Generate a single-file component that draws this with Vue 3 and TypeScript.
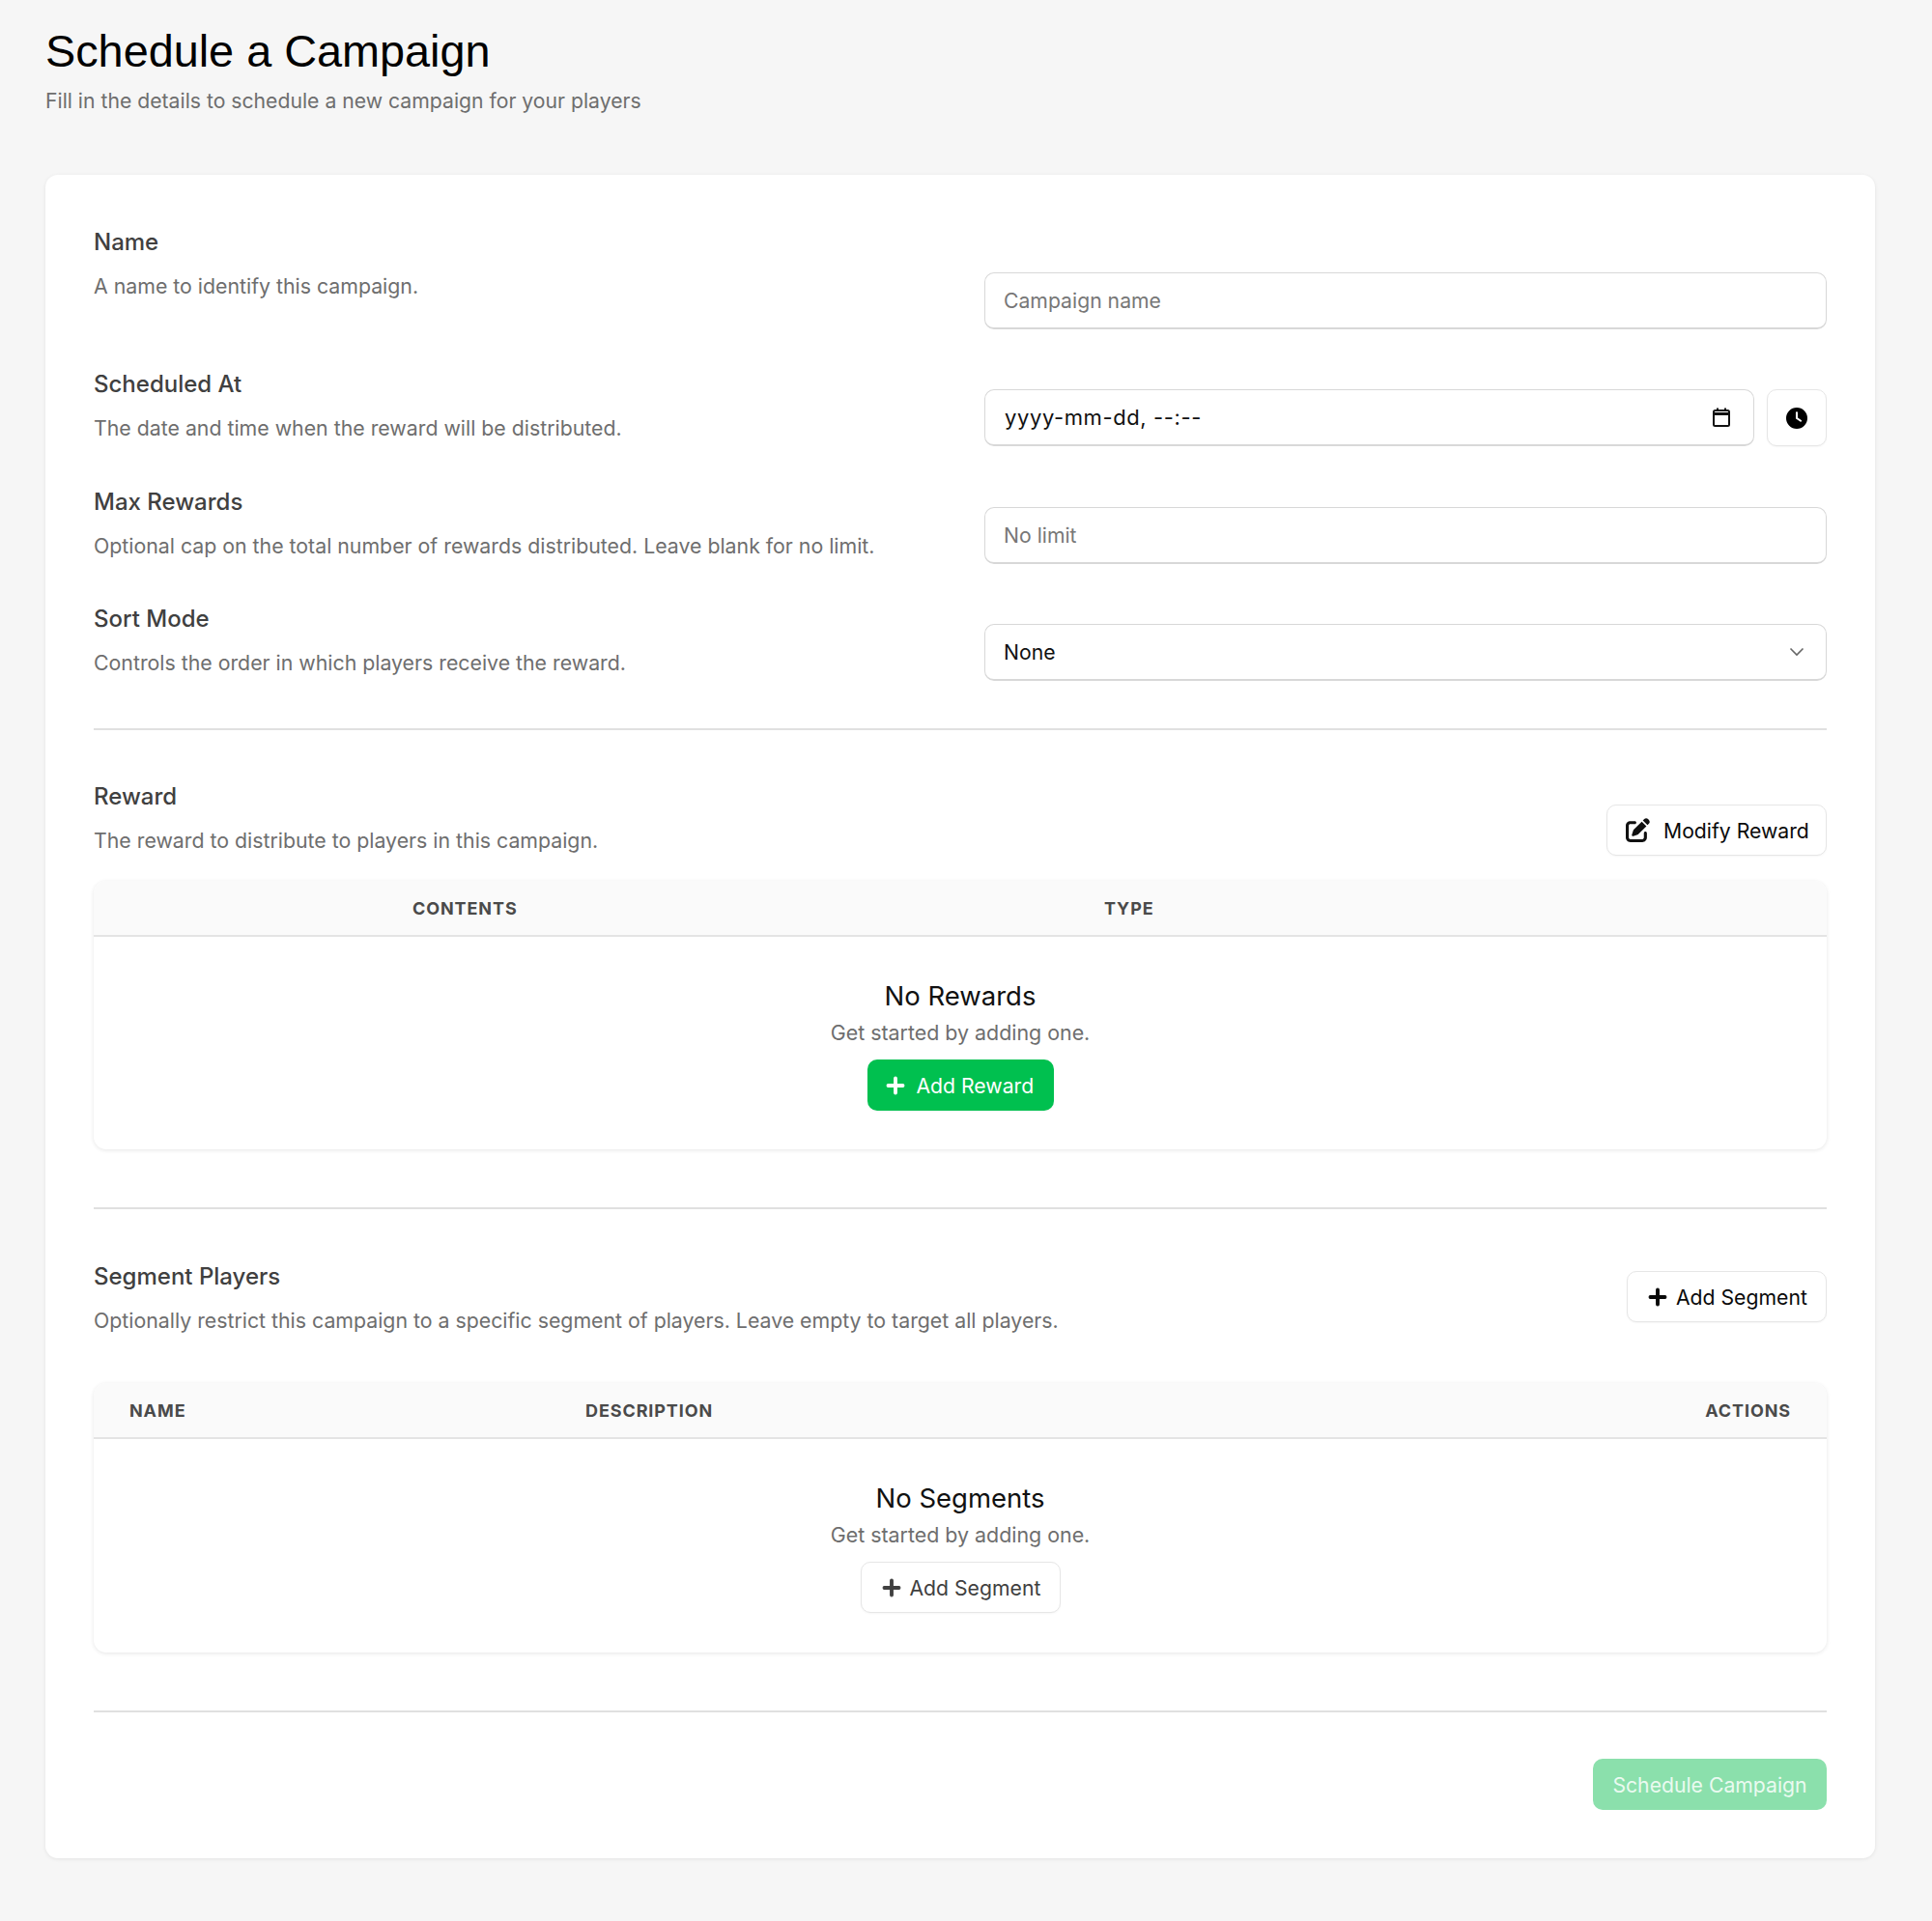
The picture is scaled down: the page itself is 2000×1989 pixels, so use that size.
<script setup lang="ts">
interface Row { label: string; desc: string; kind: string; placeholder?: string }
const rows: Row[] = [
  { label: 'Name', desc: 'A name to identify this campaign.', kind: 'text', placeholder: 'Campaign name' },
  { label: 'Scheduled At', desc: 'The date and time when the reward will be distributed.', kind: 'date' },
  { label: 'Max Rewards', desc: 'Optional cap on the total number of rewards distributed. Leave blank for no limit.', kind: 'text', placeholder: 'No limit' },
  { label: 'Sort Mode', desc: 'Controls the order in which players receive the reward.', kind: 'select' },
]
const plus = 'M256 80c0-17.7-14.3-32-32-32s-32 14.3-32 32V224H48c-17.7 0-32 14.3-32 32s14.3 32 32 32H192V432c0 17.7 14.3 32 32 32s32-14.3 32-32V288H400c17.7 0 32-14.3 32-32s-14.3-32-32-32H256V80z'
</script>

<template>
  <div class="page">
    <h1 class="title">Schedule a Campaign</h1>
    <p class="subtitle">Fill in the details to schedule a new campaign for your players</p>

    <main class="card">
      <section class="form">
        <div v-for="(r, i) in rows" :key="r.label" class="row">
          <div class="block">
            <div class="label">{{ r.label }}</div>
            <div class="desc">{{ r.desc }}</div>
          </div>
          <div class="field" :class="{ first: i === 0 }">
            <input v-if="r.kind === 'text'" class="input" type="text" :placeholder="r.placeholder" />
            <div v-else-if="r.kind === 'date'" class="date-wrap">
              <div class="input date">
                <span>yyyy-mm-dd, --:--</span>
                <svg class="cal" viewBox="0 0 18 20" fill="none" stroke="#111" stroke-width="2">
                  <rect x="1" y="3" width="16" height="16" rx="1.5" />
                  <path d="M1 6.5h16" stroke-width="3" />
                  <path d="M5 0.5v3M13 0.5v3" />
                </svg>
              </div>
              <button class="btn clock-btn" type="button" aria-label="Now">
                <svg class="clock" viewBox="0 0 512 512"><path fill-rule="evenodd" d="M256 512A256 256 0 1 0 256 0a256 256 0 1 0 0 512zM232 120V256c0 8 4 15.5 10.7 20l96 64c11 7.4 25.9 4.4 33.3-6.7s4.4-25.9-6.7-33.3L280 243.2V120c0-13.3-10.7-24-24-24s-24 10.7-24 24z" /></svg>
              </button>
            </div>
            <div v-else class="input select">
              <span>None</span>
              <svg class="chev" viewBox="0 0 16 10" fill="none" stroke="#666" stroke-width="1.6"><path d="M1.5 1.5 8 8l6.5-6.5" /></svg>
            </div>
          </div>
        </div>
      </section>

      <hr class="rule rule-a" />

      <section>
        <div class="head head-reward">
          <div class="block">
            <div class="label">Reward</div>
            <div class="desc">The reward to distribute to players in this campaign.</div>
          </div>
          <button class="btn modify" type="button">
            <svg class="edit" viewBox="0 0 512 512"><path d="M471.6 21.7c-21.9-21.9-57.3-21.9-79.2 0L362.3 51.7l97.9 97.9 30.1-30.1c21.9-21.9 21.9-57.3 0-79.2L471.6 21.7zm-299.2 220c-6.1 6.1-10.8 13.6-13.5 21.9l-29.6 88.8c-2.9 8.6-.6 18.1 5.8 24.6s15.9 8.7 24.6 5.8l88.8-29.6c8.2-2.7 15.7-7.4 21.9-13.5L437.7 172.3 339.7 74.3 172.4 241.7zM96 64C43 64 0 107 0 160V416c0 53 43 96 96 96H352c53 0 96-43 96-96V320c0-17.7-14.3-32-32-32s-32 14.3-32 32v96c0 17.7-14.3 32-32 32H96c-17.7 0-32-14.3-32-32V160c0-17.7 14.3-32 32-32h96c17.7 0 32-14.3 32-32s-14.3-32-32-32H96z" /></svg>
            <span>Modify Reward</span>
          </button>
        </div>
        <div class="table">
          <div class="thead thead-reward">
            <span></span><span>Contents</span><span>Type</span>
          </div>
          <div class="empty">
            <h3 class="empty-title">No Rewards</h3>
            <p class="empty-sub">Get started by adding one.</p>
            <button class="btn green" type="button">
              <svg class="plus" viewBox="0 0 448 512"><path :d="plus" /></svg>
              <span>Add Reward</span>
            </button>
          </div>
        </div>
      </section>

      <hr class="rule rule-b" />

      <section>
        <div class="head head-seg">
          <div class="block">
            <div class="label">Segment Players</div>
            <div class="desc">Optionally restrict this campaign to a specific segment of players. Leave empty to target all players.</div>
          </div>
          <button class="btn add-seg" type="button">
            <svg class="plus" viewBox="0 0 448 512"><path :d="plus" /></svg>
            <span>Add Segment</span>
          </button>
        </div>
        <div class="table">
          <div class="thead thead-seg">
            <span>Name</span><span>Description</span><span class="right">Actions</span>
          </div>
          <div class="empty empty-seg">
            <h3 class="empty-title">No Segments</h3>
            <p class="empty-sub">Get started by adding one.</p>
            <button class="btn add-seg muted" type="button">
              <svg class="plus" viewBox="0 0 448 512"><path :d="plus" /></svg>
              <span>Add Segment</span>
            </button>
          </div>
        </div>
      </section>

      <hr class="rule rule-b" />

      <div class="actions">
        <button class="btn submit" type="button">Schedule Campaign</button>
      </div>
    </main>
  </div>
</template>

<style>
html, body { margin: 0; background: #f6f6f6; }
</style>

<style scoped>
.page {
  box-sizing: border-box;
  min-height: 1989px;
  padding: 25px 59px 65px 47px;
  background: #f6f6f6;
  font-family: Inter, "Liberation Sans", sans-serif;
}
.title {
  margin: 0;
  font-family: "Liberation Sans", Arial, sans-serif;
  font-size: 46.8px;
  line-height: 56px;
  font-weight: 400;
  color: #000;
}
.subtitle {
  margin: 8px 0 0;
  font-size: 21.2px;
  line-height: 30px;
  color: #6e6e6e;
}
.card {
  box-sizing: border-box;
  height: 1743px;
  margin-top: 62px;
  padding: 50px;
  background: #fff;
  border-radius: 13px;
  box-shadow: 0 1px 4px rgba(0, 0, 0, 0.08);
}
.form {
  display: flex;
  flex-direction: column;
  gap: 37.4px;
}
.row {
  display: grid;
  grid-template-columns: 1fr 872px;
  column-gap: 50px;
}
.block { min-width: 0; }
.label {
  font-size: 24px;
  line-height: 40px;
  font-weight: 500;
  color: #404040;
}
.desc {
  margin-top: 6px;
  font-size: 21.3px;
  line-height: 38px;
  color: #6e6e6e;
}
.field { margin-top: 25px; }
.field.first { margin-top: 51px; }
.input {
  box-sizing: border-box;
  display: block;
  width: 100%;
  height: 59px;
  padding: 0 19px;
  border: 1.5px solid #d8d8d8;
  border-bottom-width: 2px;
  border-radius: 10px;
  background: #fff;
  font: 21.2px Inter, "Liberation Sans", sans-serif;
  color: #111;
  outline: none;
}
.input::placeholder { color: #777; opacity: 1; }
.date-wrap {
  display: flex;
  gap: 13px;
}
.date, .select {
  display: flex;
  align-items: center;
  justify-content: space-between;
}
.date {
  flex: 1;
  font-size: 22px;
  letter-spacing: 0.6px;
  padding-left: 20px;
  padding-right: 24px;
}
.cal { width: 18px; height: 20px; }
.chev { width: 16px; height: 10px; margin-right: 3px; }
.btn {
  display: inline-flex;
  align-items: center;
  box-sizing: border-box;
  height: 53px;
  border: 1.5px solid #e6e6e6;
  border-radius: 10px;
  background: #fff;
  color: #0a0a0a;
  font: 21.2px Inter, "Liberation Sans", sans-serif;
  white-space: nowrap;
  box-shadow: 0 1px 2px rgba(0, 0, 0, 0.04);
}
.clock-btn {
  width: 62px;
  height: 59px;
  justify-content: center;
  padding: 0;
}
.clock { width: 22px; height: 22px; fill: #000; }
.rule {
  height: 2px;
  border: 0;
  margin: 0;
  background: #e0e0e0;
}
.rule-a { margin-top: 49px; margin-bottom: 49px; }
.rule-b { margin-top: 60px; margin-bottom: 50px; }
.head {
  display: flex;
  justify-content: space-between;
}
.head-reward { align-items: flex-start; margin-bottom: 23px; }
.head-seg { align-items: flex-start; margin-bottom: 46px; }
.modify {
  width: 228px;
  margin-top: 28px;
  padding: 0 19px;
  gap: 14px;
}
.edit { width: 25px; height: 25px; fill: #111; flex: none; }
.add-seg {
  width: 207px;
  margin-top: 14px;
  padding: 0 19px 0 21px;
  gap: 9px;
}
.muted {
  margin-top: 0;
  color: #404040;
}
.plus {
  width: 20px;
  height: 22px;
  fill: currentColor;
  stroke: currentColor;
  stroke-width: 24;
  overflow: visible;
  flex: none;
}
.table {
  background: #fff;
  border-radius: 13px;
  box-shadow: 0 1px 4px rgba(0, 0, 0, 0.1);
  overflow: hidden;
}
.thead {
  display: grid;
  align-items: center;
  height: 56px;
  box-sizing: content-box;
  background: #fafafa;
  border-bottom: 2px solid #e4e4e4;
  font-size: 18px;
  font-weight: 700;
  letter-spacing: 0.9px;
  text-transform: uppercase;
  color: #4a4a4a;
}
.thead-reward {
  grid-template-columns: 330px 716px 1fr;
}
.thead-seg {
  grid-template-columns: 472px 1fr auto;
  padding: 0 37px;
}
.right { text-align: right; }
.empty {
  display: flex;
  flex-direction: column;
  align-items: center;
  height: 220px;
}
.empty-seg { height: 221px; }
.empty-title {
  margin: 43px 0 0;
  font-size: 27.5px;
  line-height: 36px;
  font-weight: 400;
  color: #111;
}
.empty-sub {
  margin: 4px 0 0;
  font-size: 21.4px;
  line-height: 32px;
  color: #6e6e6e;
}
.empty .btn { margin-top: 12px; }
.green {
  width: 193px;
  padding: 0 19px;
  gap: 12px;
  background: #00c04f;
  border: 0;
  color: #fff;
}
.actions {
  display: flex;
  justify-content: flex-end;
  margin-top: -2px;
}
.submit {
  width: 242px;
  justify-content: center;
  padding: 0;
  background: #8be0ac;
  border: 0;
  color: #eafaf0;
  box-shadow: none;
}
</style>
